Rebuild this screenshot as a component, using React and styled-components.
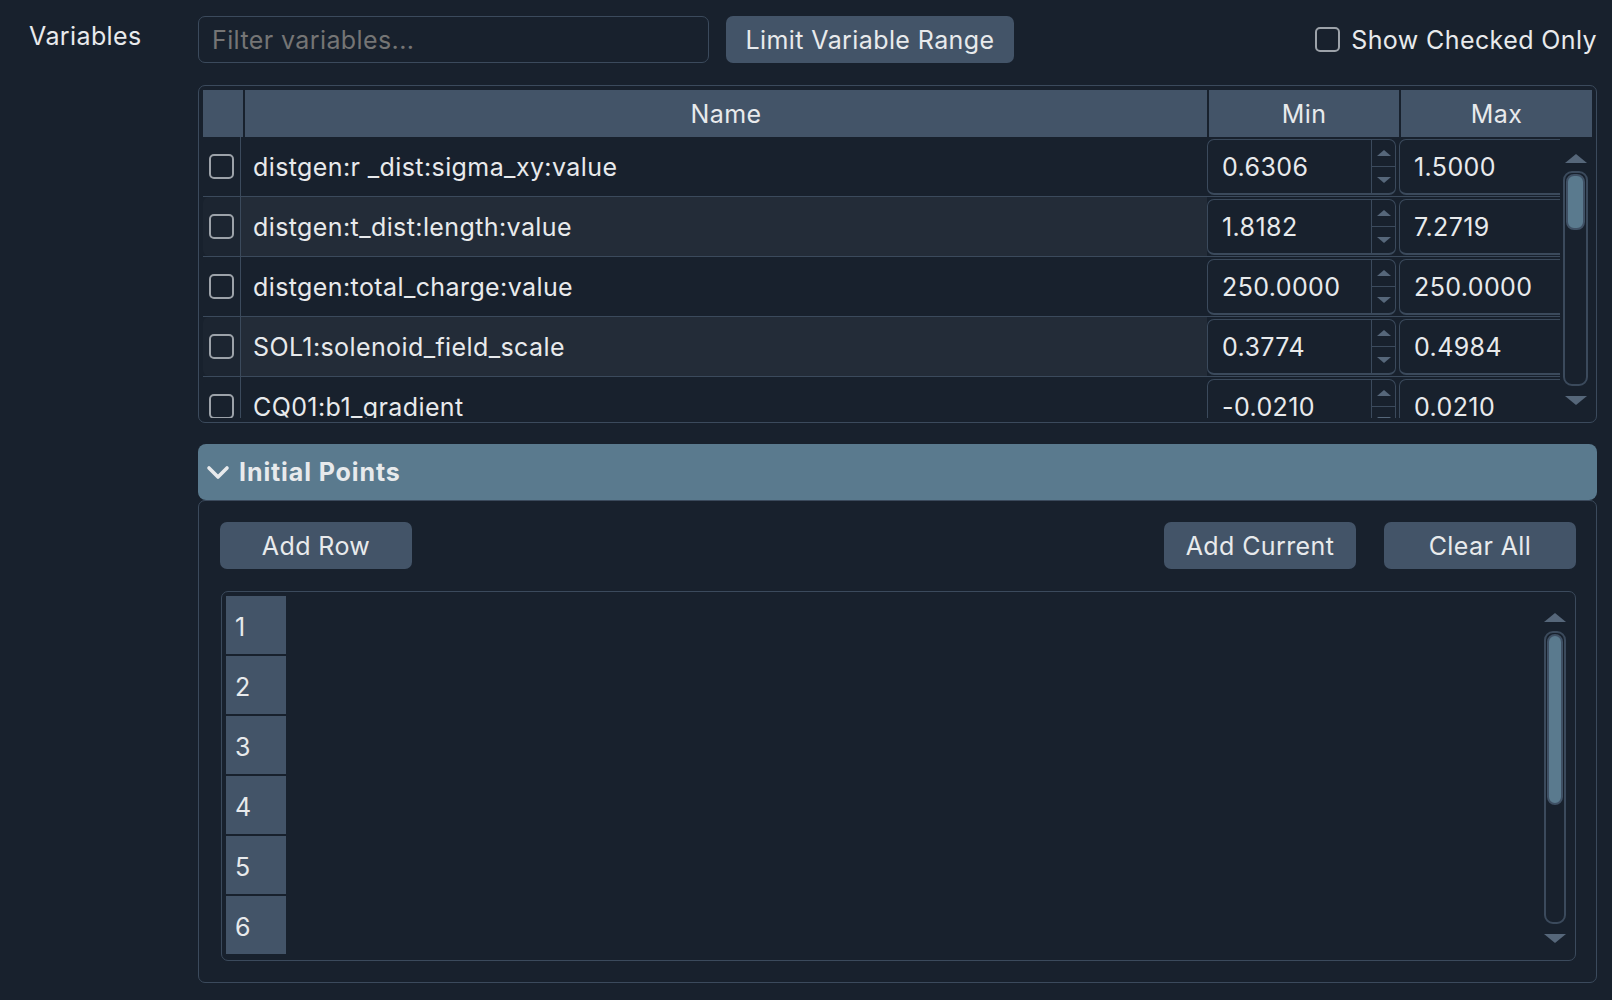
import React from 'react'
import styled, { createGlobalStyle } from 'styled-components'

const bg = '#18212d'
const line = '#3b4a5c'
const panel = '#435468'
const accent = '#5a7a8e'
const text = '#e8eaec'

const GlobalStyle = createGlobalStyle`
html, body {
    margin: 0;
    background: ${bg};
}
body {
    font-family: Inter, "Noto Sans", sans-serif;
    font-size: 25px;
    letter-spacing: 0.4px;
    color: ${text};
}`

const Page = styled.div`
display: grid;
grid-template-columns: 198px minmax(0, 1fr);
height: 1000px;
box-sizing: border-box;
padding: 16px 15px 17px 0;`

const SideLabel = styled.div`
padding: 5px 0 0 29px;`

const Main = styled.div`
display: flex;
flex-direction: column;
min-height: 0;
min-width: 0;`

const Toolbar = styled.div`
display: flex;
align-items: center;
gap: 17px;
height: 47px;`

const FilterInput = styled.input`
width: 511px;
height: 47px;
box-sizing: border-box;
background: transparent;
border: 1px solid ${line};
border-radius: 7px;
padding: 0 13px;
font: inherit;
letter-spacing: inherit;
color: ${text};
outline: none;
::placeholder { color: #7a838d; }`

const Button = styled.button`
width: ${props => props.width}px;
height: 47px;
padding: 0;
border: 0;
border-radius: 7px;
background: ${panel};
color: ${text};
font-family: inherit;
font-size: 25px;
letter-spacing: inherit;`

const CheckLabel = styled.label`
margin-left: auto;
display: flex;
align-items: center;
gap: 11px;`

const Box = styled.span`
width: 25px;
height: 25px;
box-sizing: border-box;
border: 2px solid #9ca2a9;
border-radius: 5px;`

const TableFrame = styled.div`
margin-top: 22px;
height: 338px;
box-sizing: border-box;
border: 1px solid ${line};
border-radius: 7px;
padding: 4px;
display: flex;
flex-direction: column;
overflow: hidden;`

const Header = styled.div`
display: grid;
grid-template-columns: 40px 1fr 190px 191px;
gap: 2px;
height: 47px;
flex: none;`

const HeaderCell = styled.div`
background: ${panel};
display: flex;
align-items: center;
justify-content: center;`

const Body = styled.div`
flex: 1;
display: flex;
min-height: 0;`

const Viewport = styled.div`
flex: 1;
min-width: 0;
overflow: hidden;`

const Rows = styled.div`
width: 1388px;`

const Row = styled.div`
display: grid;
grid-template-columns: 38px 1fr 192px 192px;
height: 60px;
box-sizing: border-box;
border-bottom: 1px solid ${line};`

const CheckCell = styled.div`
display: flex;
align-items: center;
justify-content: center;
border-right: 1px solid ${line};
background: ${props => props.striped ? '#1c2531' : 'transparent'};
border-radius: ${props => props.striped ? '6px 0 0 6px' : '0'};`

const NameCell = styled.div`
display: flex;
align-items: center;
padding-left: 12px;
background: ${props => props.striped ? '#232c38' : 'transparent'};`

const SpinCell = styled.div`
padding: 2px 3px 1px 0;
box-sizing: border-box;`

const SpinBox = styled.div`
display: flex;
height: 100%;
box-sizing: border-box;
border: 1px solid ${line};
border-bottom-width: 2px;
border-radius: 7px;`

const SpinValue = styled.div`
flex: 1;
display: flex;
align-items: center;
padding-left: 14px;`

const Stepper = styled.div`
width: 23px;
display: flex;
flex-direction: column;
border-left: 1px solid ${line};`

const StepHalf = styled.div`
flex: 1;
display: flex;
align-items: center;
justify-content: center;
& + & { border-top: 1px solid ${line}; }`

const Tri = styled.span`
width: 0;
height: 0;
border-left: ${props => props.size}px solid transparent;
border-right: ${props => props.size}px solid transparent;
${props => props.down ? 'border-top' : 'border-bottom'}: ${props => Math.round(props.size * 0.8)}px solid #56677a;`

const ScrollBar = styled.div`
width: ${props => props.width}px;
flex: none;
display: flex;
flex-direction: column;
align-items: center;
padding: ${props => props.pad};
box-sizing: border-box;`

const Track = styled.div`
flex: 1;
align-self: stretch;
margin: ${props => props.gap};
border: 2px solid ${line};
border-radius: 9px;
padding: 1px;
box-sizing: border-box;`

const Thumb = styled.div`
height: ${props => props.size}px;
box-sizing: border-box;
background: ${accent};
border: 2px solid #3f5064;
border-radius: 8px;`

const AccordionHeader = styled.div`
margin-top: 21px;
height: 56px;
flex: none;
display: flex;
align-items: center;
gap: 9px;
padding-left: 8px;
border-radius: 8px;
background: ${accent};
font-weight: 700;
font-size: 25px;
letter-spacing: 0.9px;`

const AccordionBody = styled.div`
flex: 1;
min-height: 0;
display: flex;
flex-direction: column;
border: 1px solid ${line};
border-radius: 7px;
padding: 21px 20px 21px 21px;`

const ButtonRow = styled.div`
display: flex;
gap: 28px;
flex: none;`

const Grow = styled.div`flex: 1;`

const PointsFrame = styled.div`
margin: 22px 0 0 1px;
flex: 1;
display: flex;
border: 1px solid ${line};
border-radius: 7px;
padding: 4px;`

const RowHeaders = styled.div`
display: flex;
flex-direction: column;
gap: 2px;
width: 60px;`

const RowHeader = styled.div`
height: 58px;
display: flex;
align-items: center;
padding: 3px 0 0 9px;
box-sizing: border-box;
background: ${panel};`

const variables = [
    {name: 'distgen:r _dist:sigma_xy:value', min: '0.6306', max: '1.5000'},
    {name: 'distgen:t_dist:length:value', min: '1.8182', max: '7.2719'},
    {name: 'distgen:total_charge:value', min: '250.0000', max: '250.0000'},
    {name: 'SOL1:solenoid_field_scale', min: '0.3774', max: '0.4984'},
    {name: 'CQ01:b1_gradient', min: '-0.0210', max: '0.0210'},
]

function Spin({value}) {
    return <SpinCell>
        <SpinBox>
            <SpinValue>{value}</SpinValue>
            <Stepper>
                <StepHalf><Tri size={7} /></StepHalf>
                <StepHalf><Tri size={7} down /></StepHalf>
            </Stepper>
        </SpinBox>
    </SpinCell>
}

function Chevron() {
    return <svg width="24" height="17" viewBox="0 0 24 17">
        <polyline points="3,4 12,13 21,4" fill="none" stroke={text} strokeWidth="3.6" strokeLinecap="round" strokeLinejoin="round" />
    </svg>
}

export default function App() {
    return <>
        <GlobalStyle />
        <Page>
            <SideLabel>Variables</SideLabel>
            <Main>
                <Toolbar>
                    <FilterInput placeholder="Filter variables..." />
                    <Button width={288}>Limit Variable Range</Button>
                    <CheckLabel><Box />Show Checked Only</CheckLabel>
                </Toolbar>

                <TableFrame>
                    <Header>
                        <HeaderCell />
                        <HeaderCell>Name</HeaderCell>
                        <HeaderCell>Min</HeaderCell>
                        <HeaderCell>Max</HeaderCell>
                    </Header>
                    <Body>
                        <Viewport>
                            <Rows>
                                {variables.map((v, i) => <Row key={v.name}>
                                    <CheckCell striped={i % 2 === 1}><Box /></CheckCell>
                                    <NameCell striped={i % 2 === 1}>{v.name}</NameCell>
                                    <Spin value={v.min} />
                                    <Spin value={v.max} />
                                </Row>)}
                            </Rows>
                        </Viewport>
                        <ScrollBar width={32} pad="17px 4px 13px 3px">
                            <Tri size={11} />
                            <Track gap="8px 0 10px">
                                <Thumb size={56} />
                            </Track>
                            <Tri size={11} down />
                        </ScrollBar>
                    </Body>
                </TableFrame>

                <AccordionHeader><Chevron />Initial Points</AccordionHeader>
                <AccordionBody>
                    <ButtonRow>
                        <Button width={192}>Add Row</Button>
                        <Grow />
                        <Button width={192}>Add Current</Button>
                        <Button width={192}>Clear All</Button>
                    </ButtonRow>
                    <PointsFrame>
                        <RowHeaders>
                            {[1, 2, 3, 4, 5, 6].map(n => <RowHeader key={n}>{n}</RowHeader>)}
                        </RowHeaders>
                        <Grow />
                        <ScrollBar width={27} pad="17px 5px 13px 0">
                            <Tri size={11} />
                            <Track gap="9px 0 10px">
                                <Thumb size={171} />
                            </Track>
                            <Tri size={11} down />
                        </ScrollBar>
                    </PointsFrame>
                </AccordionBody>
            </Main>
        </Page>
    </>
}
